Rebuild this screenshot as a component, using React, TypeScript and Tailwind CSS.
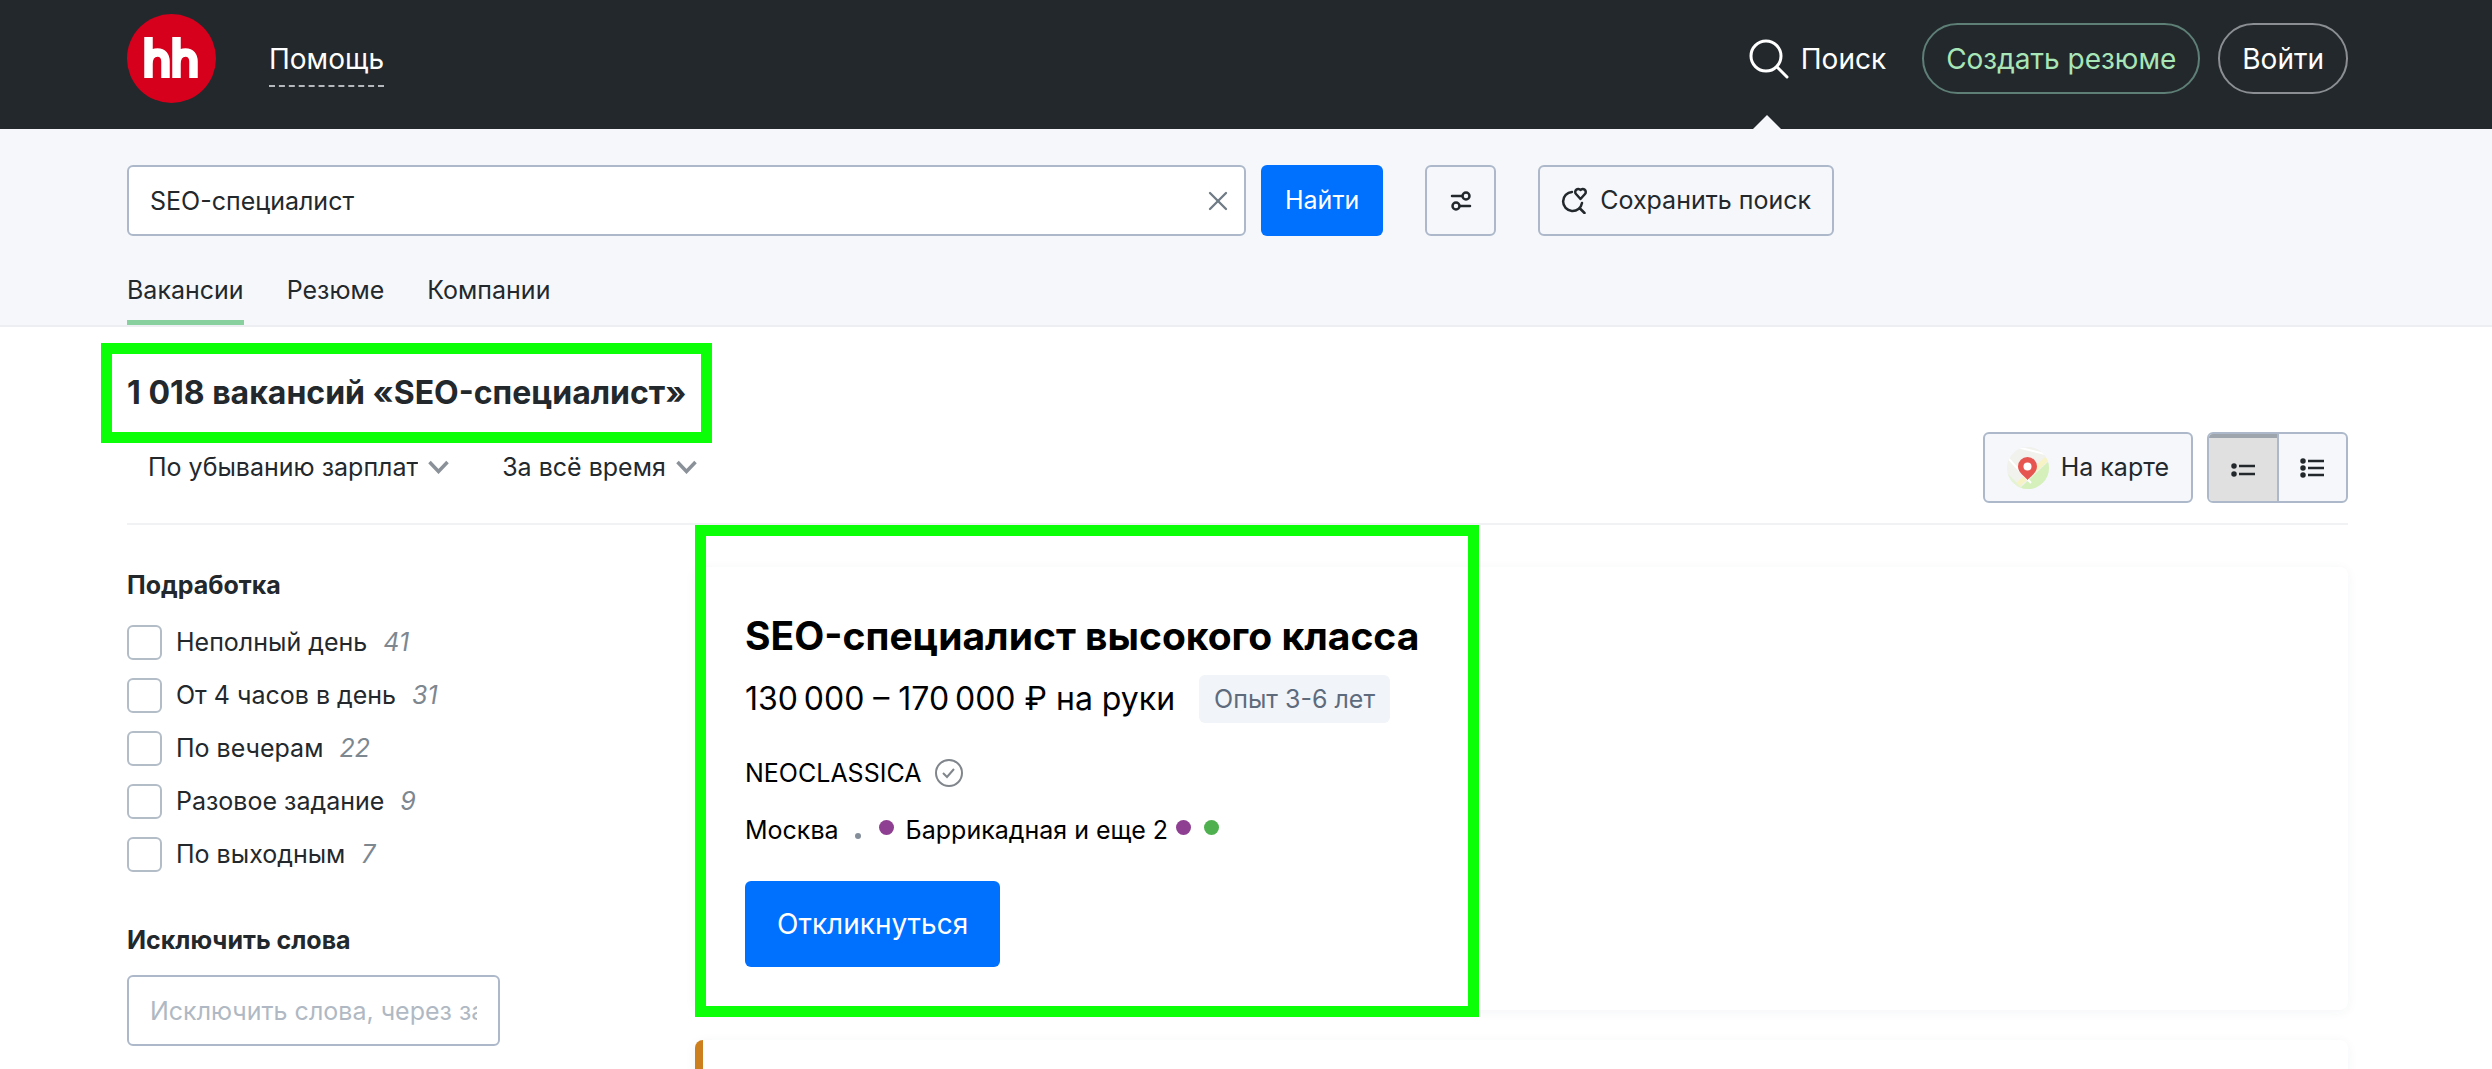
import React, { useState } from 'react';
import { X } from 'lucide-react';

interface Filter {
  id: string;
  label: string;
  count: number;
}

const filters: Filter[] = [
  { id: 'part-day', label: 'Неполный день', count: 41 },
  { id: 'four-hours', label: 'От 4 часов в день', count: 31 },
  { id: 'evenings', label: 'По вечерам', count: 22 },
  { id: 'one-time', label: 'Разовое задание', count: 9 },
  { id: 'weekends', label: 'По выходным', count: 7 },
];

const tabs = ['Вакансии', 'Резюме', 'Компании'];

const outlineButton = 'flex h-[71px] items-center justify-center rounded-md border-2 border-[#adb9ca] bg-[#f5f7fb]';

const Header: React.FC = () => (
  <header className="flex h-[129px] items-start bg-[#23282c] pt-[14px] pr-[144px] pl-[127px] text-[28px] leading-[34px] text-white">
    <a href="#home" aria-label="hh" className="shrink-0">
      <svg width="89" height="89" viewBox="0 0 89 89">
        <circle cx="44.5" cy="44.5" r="44.5" fill="#d6001c" />
        <g fill="none" stroke="#fff" strokeWidth="8.5">
          <path d="M21.5 23v41M21.5 50c0-8 3.500-11.500 9-11.500s8 3.500 8 9V64" />
          <path d="M49.500 23v41M49.500 50c0-8 3.500-11.500 9-11.500s8 3.500 8 9V64" />
        </g>
      </svg>
    </a>
    <a href="#help" className="mt-[28px] ml-[53px] border-b-2 border-dashed border-[#b5b9bd] pb-[9px]">
      Помощь
    </a>
    <div className="mt-[9px] ml-auto flex items-center">
      <a href="#search" className="relative flex h-[71px] items-center gap-3">
        <svg width="40" height="40" viewBox="0 0 40 40" fill="none" stroke="#fff" strokeWidth="3" strokeLinecap="round">
          <circle cx="17" cy="17" r="15" />
          <path d="M28 28l10 10" />
        </svg>
        Поиск
        <span className="absolute top-[92px] left-1 border-x-[14px] border-b-[14px] border-x-transparent border-b-[#f5f7fb]" />
      </a>
      <button className="ml-9 h-[71px] rounded-full border-2 border-[#5e7f76] px-[22px] text-[#a8e6b8]">
        Создать резюме
      </button>
      <button className="ml-[18px] h-[71px] rounded-full border-2 border-[#8b8f93] px-[22px]">Войти</button>
    </div>
  </header>
);

const SearchPanel: React.FC = () => {
  const [query, setQuery] = useState('SEO-специалист');
  const [active, setActive] = useState(tabs[0]);

  return (
    <section className="border-b-2 border-[#eceef1] bg-[#f5f7fb] pt-9 pr-[144px] pl-[127px]">
      <form className="flex items-center" onSubmit={(e) => e.preventDefault()}>
        <div className="relative w-[1119px]">
          <input
            type="text"
            aria-label="Поиск вакансий"
            className="h-[71px] w-full rounded-md border-2 border-[#adb9ca] bg-white pr-16 pl-[21px] text-[25px] outline-none"
            value={query}
            onChange={(e) => setQuery(e.target.value)}
          />
          <button
            type="button"
            aria-label="Очистить"
            className="absolute top-5 right-3 text-[#6f7b85]"
            onClick={() => setQuery('')}
          >
            <X size={32} strokeWidth={1.75} />
          </button>
        </div>
        <button className="ml-[15px] h-[71px] rounded-md bg-[#0070ff] px-6 text-white">Найти</button>
        <button type="button" aria-label="Фильтры" className={`${outlineButton} ml-[42px] w-[71px]`}>
          <svg width="22" height="22" viewBox="0 0 22 22" fill="none" stroke="#23282c" strokeWidth="2.5" strokeLinecap="round">
            <circle cx="16" cy="6" r="3.500" />
            <circle cx="6" cy="16" r="3.500" />
            <path d="M2 6h10M10 16h10" />
          </svg>
        </button>
        <button type="button" className={`${outlineButton} ml-[42px] gap-3 px-[21px]`}>
          <svg width="27" height="27" viewBox="0 0 27 27" fill="none" stroke="#23282c" strokeWidth="2.5" strokeLinecap="round" strokeLinejoin="round">
            <path d="M11 5A9.500 9.500 0 1 0 21 16M18.500 21l5 5" />
            <path d="M19.500 12l-4.500-5a3 3 0 0 1 4.500-4 3 3 0 0 1 4.500 4z" />
          </svg>
          Сохранить поиск
        </button>
      </form>
      <nav className="mt-9 flex gap-[43px]">
        {tabs.map((tab) => (
          <button
            key={tab}
            onClick={() => setActive(tab)}
            className={`border-b-[5px] pb-3 leading-[36px] ${active === tab ? 'border-[#88d09d]' : 'border-transparent'}`}
          >
            {tab}
          </button>
        ))}
      </nav>
    </section>
  );
};

const SortSelect: React.FC<{ label: string; options: string[] }> = ({ label, options }) => (
  <div className="flex items-center">
    <select aria-label={label} className="field-sizing-content -mr-[21px] appearance-none bg-transparent pr-[31px] leading-[32px] outline-none">
      {options.map((option) => (
        <option key={option}>{option}</option>
      ))}
    </select>
    <svg className="pointer-events-none" width="21" height="14" viewBox="0 0 21 14" fill="none" stroke="#8a9198" strokeWidth="3.5">
      <path d="M1.500 2l9 9.500 9-9.500" />
    </svg>
  </div>
);

const ResultsHeader: React.FC = () => {
  const [compact, setCompact] = useState(true);

  return (
    <section className="border-b-2 border-[#f1f2f4] pt-[43px] pb-5">
      <h1 className="relative w-fit text-[32px] leading-[46px] font-bold">
        1&nbsp;018 вакансий «SEO-специалист»
        <span className="pointer-events-none absolute -inset-x-[26px] -inset-y-[27px] border-[11px] border-[#0bff07]" />
      </h1>
      <div className="mt-4 flex items-start">
        <div className="mt-[19px] flex gap-[53px] pl-[21px]">
          <SortSelect label="Сортировка" options={['По убыванию зарплат', 'По дате']} />
          <SortSelect label="Период" options={['За всё время', 'За месяц']} />
        </div>
        <button className={`${outlineButton} ml-auto gap-3 px-[22px]`}>
          <svg width="42" height="42" viewBox="0 0 42 42">
            <clipPath id="map-clip">
              <circle cx="21" cy="21" r="21" />
            </clipPath>
            <g clipPath="url(#map-clip)">
              <rect width="42" height="42" fill="#f1f1ed" />
              <path d="M42 14L12 42h30z" fill="#d6f0bc" />
              <path d="M42 10L6 42" stroke="#f7f3c4" strokeWidth="5" />
              <path d="M0 26l16 16H0z" fill="#e4f3d4" />
              <path d="M0 10l24 26M10 0l32 8" stroke="#fff" strokeWidth="2" />
            </g>
            <path d="M20.500 33c-2-3-9.500-7-9.500-13.500a9.500 9.500 0 0 1 19 0c0 6.500-7.500 10.500-9.500 13.500z" fill="#e65550" />
            <circle cx="20.500" cy="19.500" r="4" fill="#fff" />
          </svg>
          На карте
        </button>
        <div className="ml-[14px] flex h-[71px] w-[141px] overflow-hidden rounded-md border-2 border-[#adb9ca] bg-[#f5f7fb]">
          <button
            aria-label="Краткий список"
            aria-pressed={compact}
            onClick={() => setCompact(true)}
            className="flex flex-1 items-center justify-center border-r-2 border-[#adb9ca] bg-[#e0e0e1] pt-1 shadow-[inset_0_4px_0_#9fa5ac]"
          >
            <svg width="24" height="14" viewBox="0 0 24 14" stroke="#23282c" strokeWidth="2.5">
              <path d="M8 3h16M8 11h16" />
              <circle cx="3" cy="3" r="1.500" />
              <circle cx="3" cy="11" r="1.500" />
            </svg>
          </button>
          <button
            aria-label="Подробный список"
            aria-pressed={!compact}
            onClick={() => setCompact(false)}
            className="flex flex-1 items-center justify-center"
          >
            <svg width="24" height="20" viewBox="0 0 24 20" stroke="#23282c" strokeWidth="2.5">
              <path d="M8 3h16M8 10h16M8 17h16" />
              <circle cx="3" cy="3" r="1.500" />
              <circle cx="3" cy="10" r="1.500" />
              <circle cx="3" cy="17" r="1.500" />
            </svg>
          </button>
        </div>
      </div>
    </section>
  );
};

const Sidebar: React.FC = () => (
  <aside className="w-[568px] shrink-0 pt-[42px]">
    <h2 className="leading-[36px] font-bold">Подработка</h2>
    <ul className="mt-[22px] flex flex-col gap-[18px]">
      {filters.map((filter) => (
        <li key={filter.id} className="flex h-[35px] items-center">
          <input
            type="checkbox"
            id={filter.id}
            className="size-[35px] appearance-none rounded-md border-2 border-[#b3bdc8] bg-white checked:bg-[#0070ff]"
          />
          <label htmlFor={filter.id} className="pl-[14px]">
            {filter.label}
            <span className="ml-4 text-[#7d8790] italic">{filter.count}</span>
          </label>
        </li>
      ))}
    </ul>
    <h2 className="mt-[50px] leading-[36px] font-bold">
      <label htmlFor="exclude">Исключить слова</label>
    </h2>
    <input
      id="exclude"
      type="text"
      placeholder="Исключить слова, через запятую"
      className="mt-[17px] h-[71px] w-[373px] rounded-md border-2 border-[#adb9ca] px-[21px] outline-none placeholder:text-[#b0b9c3]"
    />
  </aside>
);

const VacancyCard: React.FC = () => (
  <article className="relative rounded-lg bg-white px-[50px] pt-[42px] pb-[43px] text-black shadow-[0_2px_12px_rgba(30,60,100,0.05)]">
    <h2 className="text-[39px] leading-[54px] font-bold">
      <a href="#vacancy">SEO-специалист высокого класса</a>
    </h2>
    <div className="mt-3 flex items-center">
      <span className="text-[32px] leading-[48px]">130&#8201;000 – 170&#8201;000 ₽ на руки</span>
      <span className="ml-6 rounded-md bg-[#f1f4f8] px-[15px] leading-[48px] text-[#5e6b7d]">Опыт 3-6 лет</span>
    </div>
    <div className="mt-8 flex items-center leading-[36px]">
      <a href="#company">NEOCLASSICA</a>
      <svg className="ml-[14px]" width="28" height="28" viewBox="0 0 28 28" fill="none" stroke="#80868c" strokeWidth="2">
        <circle cx="14" cy="14" r="13" />
        <path d="M8 14l4 4 7-8" />
      </svg>
    </div>
    <div className="mt-[21px] flex items-center leading-[36px]">
      Москва
      <span className="mt-3 ml-4 size-[6px] rounded-full bg-[#848e9a]" />
      <span className="mr-3 mb-[6px] ml-[18px] size-[15px] rounded-full bg-[#8f3f91]" />
      Баррикадная и еще 2
      <span className="mb-[6px] ml-2 size-[15px] rounded-full bg-[#8f3f91]" />
      <span className="mb-[6px] ml-[13px] size-[15px] rounded-full bg-[#4fb04f]" />
    </div>
    <button className="mt-[33px] h-[86px] rounded-md bg-[#0070ff] px-8 text-[28px] text-white">Откликнуться</button>
    <span className="pointer-events-none absolute -top-[42px] -bottom-[7px] left-0 w-[784px] border-[11px] border-[#0bff07]" />
  </article>
);

export default function App() {
  return (
    <div className="h-screen overflow-hidden bg-white font-['Inter','Liberation_Sans',sans-serif] text-[25px] text-[#23282c]">
      <Header />
      <SearchPanel />
      <main className="pr-[144px] pl-[127px]">
        <ResultsHeader />
        <div className="flex">
          <Sidebar />
          <div className="flex flex-1 flex-col gap-[30px] pt-[42px]">
            <VacancyCard />
            <article className="h-[400px] rounded-lg border-l-8 border-[#cd7f1d] bg-white shadow-[0_2px_12px_rgba(30,60,100,0.05)]" />
          </div>
        </div>
      </main>
    </div>
  );
}
